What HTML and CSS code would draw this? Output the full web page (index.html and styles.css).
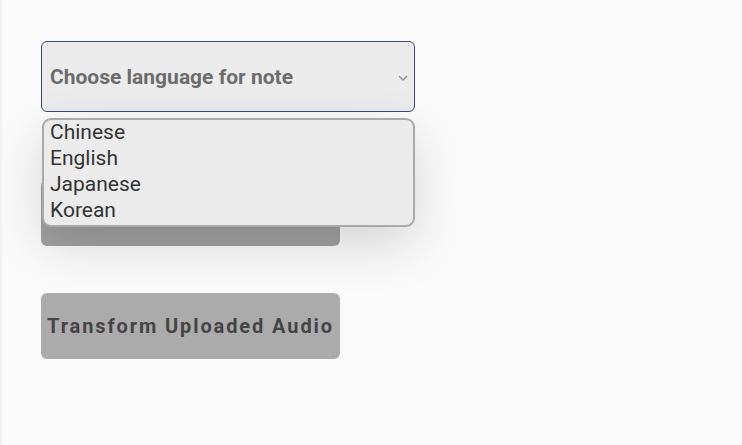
FILE: index.html
```html
<!DOCTYPE html>
<html>
<head>
<meta charset="UTF-8">
<title>Note</title>
<link rel="stylesheet" href="styles.css">
</head>
<body>
  <div class="panel">
    <div class="select-wrap">
      <div class="select">
        <span class="select-label">Choose language for note</span>
        <svg class="chevron" width="10" height="6" viewBox="0 0 10 6"><path d="M1 1 L5 5 L9 1" fill="none" stroke="#8a8a8a" stroke-width="1.3"/></svg>
      </div>
      <!-- opened option list -->
      <ul class="options">
        <li>Chinese</li>
        <li>English</li>
        <li>Japanese</li>
        <li>Korean</li>
      </ul>
    </div>
    <button class="btn btn-record">Record Audio</button>
    <button class="btn">Transform Uploaded Audio</button>
  </div>
</body>
</html>
```

FILE: styles.css
```css
html, body {
  margin: 0;
  height: 100%;
}

body {
  background-color: #fafafa;
  font-family: Roboto, "Liberation Sans", sans-serif;
  border-left: 2px solid #f1f1f1;
  box-sizing: border-box;
}

.panel {
  padding: 41px 0 0 39px;
  display: flex;
  flex-direction: column;
  align-items: flex-start;
}

.select-wrap {
  position: relative;
}

.select {
  width: 374px;
  height: 71px;
  box-sizing: border-box;
  border: 1px solid #3d4775;
  border-radius: 6px;
  background-color: #ebebeb;
  display: flex;
  align-items: center;
  justify-content: space-between;
  padding: 0 6px 0 8px;
}

.select-label {
  font-size: 21px;
  font-weight: bold;
  color: #6c6c6c;
}

.chevron {
  margin-top: 2px;
}

.options {
  position: absolute;
  left: 1px;
  top: 77px;
  width: 373px;
  box-sizing: border-box;
  margin: 0;
  padding: 0 0 1px 6px;
  list-style: none;
  background-color: #ebebeb;
  border: 2px solid #a9a9a9;
  border-radius: 9px;
  box-shadow: 0 18px 50px rgba(0, 0, 0, 0.15);
  z-index: 2;
}

.options li {
  font-size: 21px;
  line-height: 26px;
  color: #333;
  position: relative;
  top: -1px;
}

.btn {
  width: 299px;
  height: 66px;
  border: none;
  border-radius: 6px;
  background-color: #ababab;
  font-family: Roboto, "Liberation Sans", sans-serif;
  font-size: 20px;
  font-weight: bold;
  letter-spacing: 1.9px;
  color: #444;
  padding: 0;
  margin-top: 47px;
  white-space: nowrap;
}

.btn-record {
  margin-top: 68px;
  background-color: #a0a0a0;
}
```
